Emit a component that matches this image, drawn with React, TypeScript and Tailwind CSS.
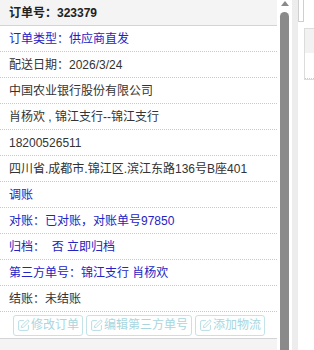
import { SquarePen } from "lucide-react";

type Row = { text: string; blue?: boolean };

const rows: Row[] = [
  { text: "订单类型：供应商直发", blue: true },
  { text: "配送日期：2026/3/24" },
  { text: "中国农业银行股份有限公司" },
  { text: "肖杨欢 , 锦江支行--锦江支行" },
  { text: "18200526511" },
  { text: "四川省.成都市.锦江区.滨江东路136号B座401" },
  { text: "调账", blue: true },
  { text: "对账：已对账，对账单号97850", blue: true },
  { text: "归档：  否 立即归档", blue: true },
  { text: "第三方单号：锦江支行 肖杨欢", blue: true },
  { text: "结账：未结账" },
];

const buttons = ["修改订单", "编辑第三方单号", "添加物流"];

export default function App() {
  return (
    <div
      className="flex h-[350px] w-[314px] overflow-hidden bg-white text-[12px] text-[#333]"
      style={{ fontFamily: '"Liberation Sans", "Noto Sans CJK SC", sans-serif' }}
    >
      {/* order panel */}
      <div className="flex w-[277px] shrink-0 flex-col">
        <div className="flex h-[26px] shrink-0 items-center border-b border-[#d4d4d4] bg-[#f4f4f4] pl-[9px] font-bold text-[#222]">
          订单号：323379
        </div>
        {rows.map((r, i) => (
          <div
            key={i}
            className={`flex h-[26px] shrink-0 items-center whitespace-pre border-b border-dotted border-[#c8c8c8] pl-[9px] ${
              r.blue ? "text-[#2323c4]" : ""
            }`}
          >
            {r.text}
          </div>
        ))}
        <div className="flex h-[26px] shrink-0 items-center gap-[3px] pl-[13px]">
          {buttons.map((b) => (
            <div
              key={b}
              className="flex h-[21px] items-center gap-[1px] rounded-[3px] border border-[#c4e3e8] px-[3px] text-[#a9d6de]"
            >
              <SquarePen size={13} strokeWidth={1.6} />
              <span>{b}</span>
            </div>
          ))}
        </div>
        <div className="flex h-[30px] shrink-0 items-center border-t border-[#d4d4d4] bg-[#f4f4f4] pl-[9px] pt-[20px] font-bold text-[#222]">
          物流信息
        </div>
      </div>

      {/* scrollbar */}
      <div className="flex w-[15px] shrink-0 flex-col items-center pl-[3px] pr-[3px]">
        <div className="mt-[1px] h-0 w-0 border-x-[4px] border-b-[5px] border-x-transparent border-b-[#8a8a8a]" />
        <div className="mt-[6px] w-[9px] flex-1 rounded-t-full bg-[#8a8a8a]" />
      </div>

      {/* side strip */}
      <div className="w-[6px] shrink-0 bg-[#ededed]" />

      {/* neighbouring panel */}
      <div className="flex flex-1 flex-col">
        <div className="h-[22px] w-[6px] border border-t-0 border-[#cfcfcf] bg-white" />
        <div className="ml-[6px] mt-[6px] flex h-[52px] flex-col border border-r-0 border-[#dcdcdc]">
          <div className="h-[24px] bg-[#f2f2f2]" />
          <div className="flex-1 border-b border-dotted border-[#ccc] bg-white" />
        </div>
      </div>
    </div>
  );
}
